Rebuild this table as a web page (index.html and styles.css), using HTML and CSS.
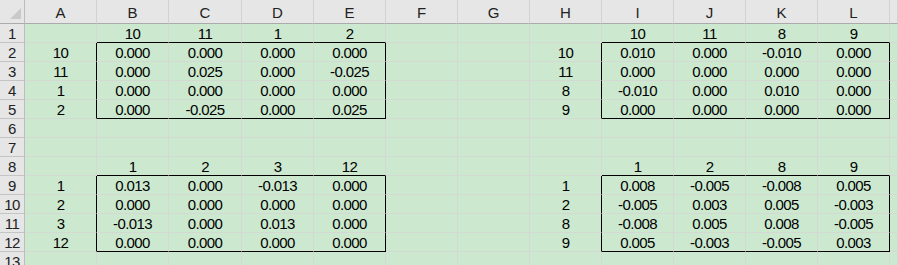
FILE: index.html
```html
<!DOCTYPE html>
<html lang="en">
<head>
    <meta charset="UTF-8">
    <meta name="viewport" content="width=device-width, initial-scale=1.0">
    <title>Sheet1</title>
    <link rel="stylesheet" href="styles.css">
</head>
<body>

    <div class="sheet" id="sheet"></div>

    <script>
        const cols = ['A', 'B', 'C', 'D', 'E', 'F', 'G', 'H', 'I', 'J', 'K', 'L', ''];

        // Cell values, one array per row, columns A..L
        const rows = [
            ['', '10', '11', '1', '2', '', '', '', '10', '11', '8', '9'],
            ['10', '0.000', '0.000', '0.000', '0.000', '', '', '10', '0.010', '0.000', '-0.010', '0.000'],
            ['11', '0.000', '0.025', '0.000', '-0.025', '', '', '11', '0.000', '0.000', '0.000', '0.000'],
            ['1', '0.000', '0.000', '0.000', '0.000', '', '', '8', '-0.010', '0.000', '0.010', '0.000'],
            ['2', '0.000', '-0.025', '0.000', '0.025', '', '', '9', '0.000', '0.000', '0.000', '0.000'],
            [],
            [],
            ['', '1', '2', '3', '12', '', '', '', '1', '2', '8', '9'],
            ['1', '0.013', '0.000', '-0.013', '0.000', '', '', '1', '0.008', '-0.005', '-0.008', '0.005'],
            ['2', '0.000', '0.000', '0.000', '0.000', '', '', '2', '-0.005', '0.003', '0.005', '-0.003'],
            ['3', '-0.013', '0.000', '0.013', '0.000', '', '', '8', '-0.008', '0.005', '0.008', '-0.005'],
            ['12', '0.000', '0.000', '0.000', '0.000', '', '', '9', '0.005', '-0.003', '-0.005', '0.003'],
            []
        ];

        // Ranges with an outside border: [firstRow, lastRow, firstCol, lastCol], 1-based
        const boxes = [
            [2, 5, 2, 5],
            [2, 5, 9, 12],
            [9, 12, 2, 5],
            [9, 12, 9, 12]
        ];

        function rightEdge(r, c) {
            return boxes.some(b => r >= b[0] && r <= b[1] && (c === b[2] - 1 || c === b[3]));
        }

        function bottomEdge(r, c) {
            return boxes.some(b => c >= b[2] && c <= b[3] && (r === b[0] - 1 || r === b[1]));
        }

        function addCell(cls, text) {
            const div = document.createElement('div');
            div.className = cls;
            div.textContent = text;
            sheet.appendChild(div);
            return div;
        }

        const sheet = document.getElementById('sheet');

        // Column header row
        addCell('corner', '').appendChild(document.createElement('span')).className = 'corner-mark';
        cols.forEach(name => addCell('col-head', name));

        // Body rows
        rows.forEach((row, i) => {
            const r = i + 1;
            addCell('row-head', r);
            for (let c = 1; c <= cols.length; c++) {
                let cls = 'cell';
                if (rightEdge(r, c)) cls += ' edge-r';
                if (bottomEdge(r, c)) cls += ' edge-b';
                addCell(cls, row[c - 1] || '');
            }
        });
    </script>
</body>
</html>
```

FILE: styles.css
```css
html, body {
    margin: 0;
    padding: 0;
    overflow: hidden;
}
body {
    font-family: "Liberation Sans", Arial, sans-serif;
    background-color: #cce8cf;
}
.sheet {
    display: grid;
    grid-template-columns: 25px 72px 72px 73px 72px 72px 72px 72px 72px 72px 72px 72px 72px 1fr;
    grid-template-rows: 24px;
    grid-auto-rows: 19px;
    width: 898px;
    height: 265px;
    overflow: hidden;
}
.sheet > div {
    box-sizing: border-box;
    display: flex;
    align-items: flex-end;
    justify-content: center;
    white-space: nowrap;
    overflow: hidden;
    line-height: 15px;
    padding-bottom: 1px;
}

/* headers */
.corner, .col-head, .row-head {
    background-color: #e6e6e6;
    color: #222;
    font-size: 15px;
}
.corner {
    position: relative;
    border-right: 1px solid #bcbcbc;
    border-bottom: 1px solid #ababab;
}
.corner-mark {
    position: absolute;
    right: 3px;
    bottom: 4px;
    width: 11px;
    height: 11px;
    background-color: #c9c9c9;
    clip-path: polygon(100% 0, 100% 100%, 0 100%);
}
.col-head {
    border-right: 1px solid #d2d2d2;
    border-bottom: 1px solid #ababab;
    padding-bottom: 3px !important;
}
.row-head {
    border-right: 1px solid #bcbcbc;
    border-bottom: 1px solid #c4c4c4;
    letter-spacing: -0.5px;
}

/* cells */
.cell {
    color: #000;
    font-size: 15px;
    letter-spacing: -0.6px;
    border-right: 1px solid #d4d9d4;
    border-bottom: 1px solid #d4d9d4;
}
.cell.edge-r {
    border-right-color: #000;
}
.cell.edge-b {
    border-bottom-color: #000;
}
```
